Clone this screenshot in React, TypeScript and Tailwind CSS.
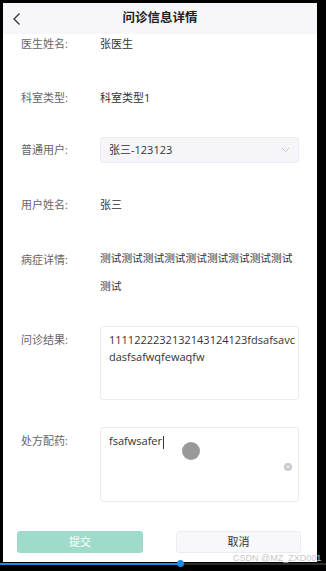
export default function App() {
  const label = "w-[97px] shrink-0 pl-[18px] text-[11px] text-[#666]";
  return (
    <div className="relative w-[326px] h-[571px] bg-black overflow-hidden font-['Open_Sans','Noto_Sans_CJK_SC',sans-serif]">
      <div className="ml-[3px] mt-[3px] w-[314px] h-[559px] bg-white flex flex-col">
        <div className="h-[31px] bg-[#f7f6fa] grid grid-cols-[40px_1fr_40px] items-center">
          <div className="pl-[9px] flex items-center">
            <svg width="10" height="14" viewBox="0 0 10 14">
              <path d="M7.5 1.5 L2 7 L7.5 12.5" fill="none" stroke="#333" strokeWidth="1.3" />
            </svg>
          </div>
          <div className="text-center text-[12.5px] font-bold text-[#222]">问诊信息详情</div>
          <div />
        </div>

        <div className="flex h-[20px] items-center">
          <div className={label}>医生姓名:</div>
          <div className="text-[11px] text-[#333]">张医生</div>
        </div>

        <div className="flex h-[20px] items-center mt-[34px]">
          <div className={label}>科室类型:</div>
          <div className="text-[11px] text-[#333]">科室类型1</div>
        </div>

        <div className="flex items-center mt-[29px] pr-[18px]">
          <div className={label}>普通用户:</div>
          <div className="flex-1 h-[26px] rounded-[3px] bg-[#f5f5fa] border border-[#ebebf0] flex items-center justify-between pl-[8px] pr-[8px]">
            <span className="text-[11px] text-[#333]">张三-123123</span>
            <svg width="9" height="6" viewBox="0 0 9 6">
              <path d="M1 1 L4.5 4.5 L8 1" fill="none" stroke="#c0c4cc" strokeWidth="1" />
            </svg>
          </div>
        </div>

        <div className="flex h-[20px] items-center mt-[32px]">
          <div className={label}>用户姓名:</div>
          <div className="text-[11px] text-[#333]">张三</div>
        </div>

        <div className="flex mt-[29px] pr-[18px]">
          <div className={label + " leading-[28px] pt-[2px]"}>病症详情:</div>
          <div className="flex-1 text-[10.7px] leading-[28px] text-[#333] break-all">
            测试测试测试测试测试测试测试测试测试测试
          </div>
        </div>

        <div className="flex mt-[26px] pr-[18px]">
          <div className={label + " leading-[16px] pt-[6px]"}>问诊结果:</div>
          <div className="flex-1 h-[74px] rounded-[3px] border border-[#ebebf0] pl-[8px] pr-[3px] pt-[5px] text-[11px] leading-[16.5px] text-[#333] break-all">
            1111222232132143124123fdsafsavcdasfsafwqfewaqfw
          </div>
        </div>

        <div className="flex mt-[27px] pr-[18px]">
          <div className={label + " leading-[16px] pt-[6px]"}>处方配药:</div>
          <div className="relative flex-1 h-[75px] rounded-[3px] border border-[#ebebf0] px-[8px] pt-[5px] text-[11px] leading-[16px] text-[#333]">
            <span>fsafwsafer</span>
            <span className="inline-block w-px h-[13px] bg-[#333] align-middle ml-px" />
            <div className="absolute right-[6px] top-[35px] w-[8px] h-[8px] rounded-full bg-[#c5c8d0] flex items-center justify-center">
              <svg width="4" height="4" viewBox="0 0 4 4">
                <path d="M0.5 0.5 L3.5 3.5 M3.5 0.5 L0.5 3.5" stroke="#fff" strokeWidth="0.8" />
              </svg>
            </div>
          </div>
        </div>

        <div className="flex mt-[29px] pl-[14px] gap-[33px]">
          <div className="w-[126px] h-[22px] rounded-[3px] bg-[#9fdbca] text-white text-[11px] flex items-center justify-center">提交</div>
          <div className="w-[125px] h-[22px] rounded-[3px] bg-[#f8f7fa] border border-[#ececf0] text-[#333] text-[11px] flex items-center justify-center">取消</div>
        </div>
      </div>

      <div className="flex items-center h-[4px]">
        <div className="w-[180px] h-[2px] bg-[#1e88e5]" />
        <div className="flex-1 h-[2px] bg-[#2a2a2a]" />
      </div>

      <div className="absolute left-[177px] top-[560px] w-[7px] h-[7px] rounded-full bg-[#1e88e5]" />
      <div className="absolute left-[182px] top-[442px] w-[18px] h-[18px] rounded-full bg-[#8e8e8e] opacity-90" />
      <div className="absolute left-[233px] top-[552px] whitespace-nowrap text-[9px] leading-[12px] text-[#c8c8c8] font-['Liberation_Sans',sans-serif]">CSDN @MZ_ZXD001</div>
    </div>
  );
}
